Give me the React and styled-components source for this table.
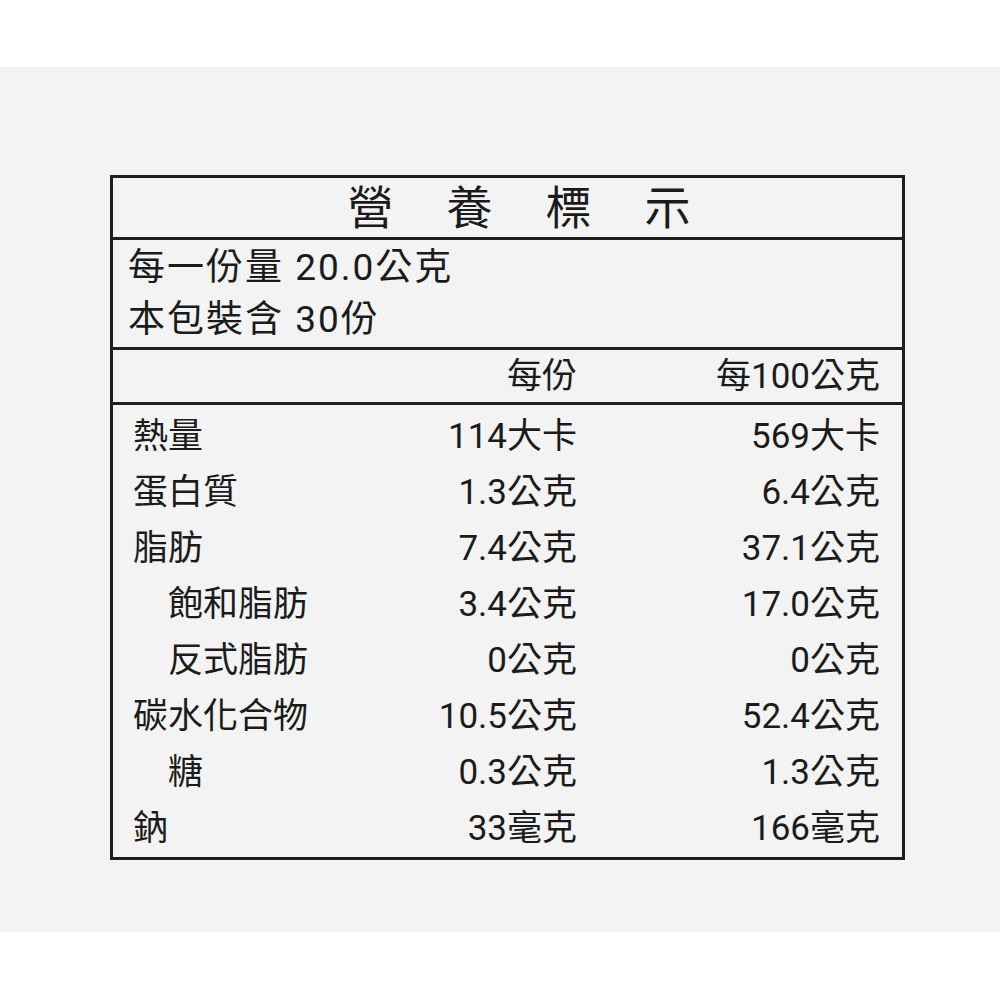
import styled, { createGlobalStyle } from "styled-components";

const GlobalStyle = createGlobalStyle`
	html, body {
		margin: 0;
		padding: 0;
		background: #ffffff;
	}

	body {
		font-family: Roboto, "Noto Sans CJK TC", "Noto Sans CJK SC", sans-serif;
		color: #1b1b1b;
	}
`;

const nutrients = [
	{ name: "熱量", perServing: "114大卡", per100: "569大卡" },
	{ name: "蛋白質", perServing: "1.3公克", per100: "6.4公克" },
	{ name: "脂肪", perServing: "7.4公克", per100: "37.1公克" },
	{ name: "飽和脂肪", perServing: "3.4公克", per100: "17.0公克", sub: true },
	{ name: "反式脂肪", perServing: "0公克", per100: "0公克", sub: true },
	{ name: "碳水化合物", perServing: "10.5公克", per100: "52.4公克" },
	{ name: "糖", perServing: "0.3公克", per100: "1.3公克", sub: true },
	{ name: "鈉", perServing: "33毫克", per100: "166毫克" }
];

export default function App() {
	return (
		<>
			<GlobalStyle />
			<Page>
				<Panel>
					<Label>
						<Title>營養標示</Title>
						<Serving>
							<div>每一份量 20.0公克</div>
							<div>本包裝含 30份</div>
						</Serving>
						<HeaderRow>
							<span />
							<Value>每份</Value>
							<Value>每100公克</Value>
						</HeaderRow>
						<Body>
							{nutrients.map((item) => (
								<Row key={item.name}>
									<Name $sub={item.sub}>{item.name}</Name>
									<Value>{item.perServing}</Value>
									<Value>{item.per100}</Value>
								</Row>
							))}
						</Body>
					</Label>
				</Panel>
			</Page>
		</>
	);
}

const Page = styled.div`
	width: 1000px;
	height: 1000px;
	padding-top: 67px;
	box-sizing: border-box;
	background: #ffffff;
`;

const Panel = styled.div`
	height: 865px;
	background: #f3f3f3;
	padding: 108px 0 0 110px;
	box-sizing: border-box;
`;

const Label = styled.div`
	width: 795px;
	border: 3px solid #1e1e1e;
	box-sizing: border-box;
	display: flex;
	flex-direction: column;
`;

const Title = styled.div`
	height: 59px;
	border-bottom: 3px solid #1e1e1e;
	display: flex;
	align-items: center;
	justify-content: center;
	padding-left: 76px;
	font-size: 46px;
	letter-spacing: 53px;
	line-height: 1;
`;

const Serving = styled.div`
	height: 110px;
	border-bottom: 3px solid #1e1e1e;
	padding: 2px 0 0 15px;
	box-sizing: border-box;
	font-size: 37px;
	letter-spacing: 2px;
	line-height: 52px;
`;

const grid = `
	display: grid;
	grid-template-columns: 1fr 160px 303px;
	align-items: center;
	padding: 0 22px 0 20px;
	font-size: 35px;
	line-height: 1.2;
	box-sizing: border-box;
`;

const HeaderRow = styled.div`
	${grid}
	height: 55px;
	padding-top: 2px;
	border-bottom: 3px solid #1e1e1e;
`;

const Body = styled.div`
	height: 452px;
	padding-top: 4px;
	box-sizing: border-box;
`;

const Row = styled.div`
	${grid}
	height: 56px;
`;

const Name = styled.span`
	padding-left: ${(p) => (p.$sub ? "35px" : "0")};
`;

const Value = styled.span`
	text-align: right;
`;
